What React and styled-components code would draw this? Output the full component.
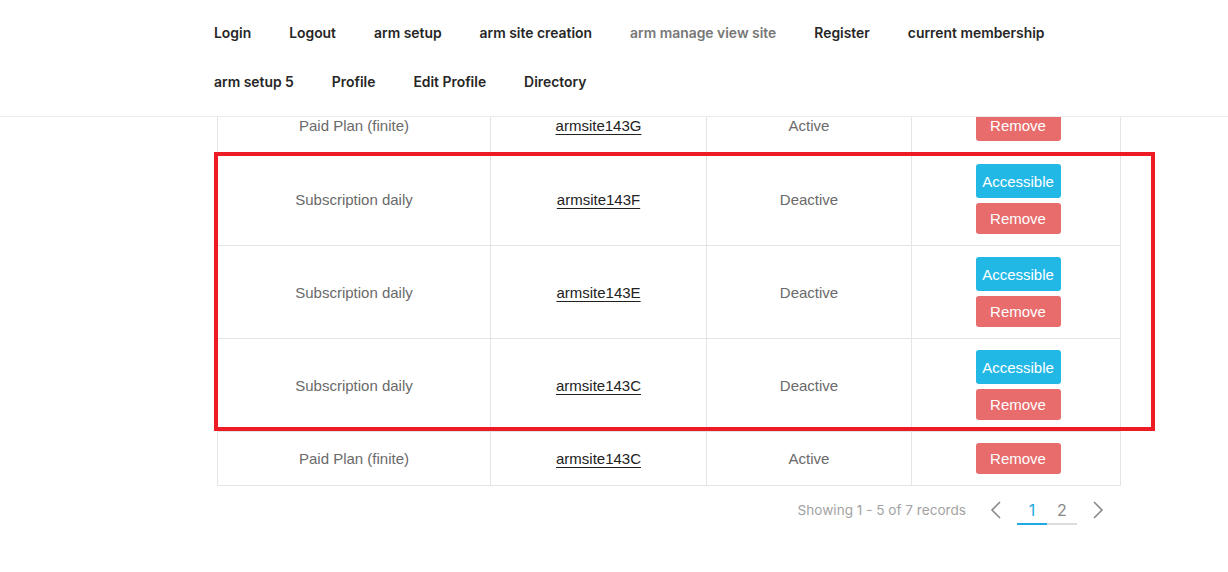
import React from 'react';
import styled, { createGlobalStyle } from 'styled-components';

const GlobalStyle = createGlobalStyle`
  body {
    margin: 0;
    background: #fff;
    font-family: 'Liberation Sans', Arial, sans-serif;
  }
`;

const Header = styled.header`
  position: fixed;
  top: 0;
  left: 0;
  right: 0;
  height: 116px;
  background: #fff;
  border-bottom: 1px solid #ececec;
  z-index: 10;
`;

const Nav = styled.nav`
  display: flex;
  flex-wrap: wrap;
  column-gap: 38px;
  padding: 22px 0 0 214px;
  width: 860px;
`;

const NavItem = styled.a`
  font-family: 'Inter', 'Noto Sans', sans-serif;
  font-size: 13.9px;
  font-weight: 600;
  line-height: 49px;
  height: 49px;
  margin-top: -13px;
  margin-bottom: 13px;
  color: ${(p) => (p.current ? '#777' : '#262626')};
  text-decoration: none;
  white-space: nowrap;
`;

const Main = styled.main`
  padding: 98px 0 0 217px;
  width: 903px;
`;

const Wrap = styled.div`
  position: relative;
`;

const Table = styled.table`
  width: 903px;
  border-collapse: collapse;
  table-layout: fixed;
`;

const Td = styled.td`
  border: 1px solid #e1e5e7;
  text-align: center;
  vertical-align: middle;
  padding: 11px 8px;
  font-size: 15px;
  color: #6a6a6a;
  height: ${(p) => (p.tall ? '70px' : '30px')};
`;

const SiteLink = styled.a`
  color: #222;
  text-decoration: underline;
  text-underline-offset: 3px;
`;

const Actions = styled.div`
  display: flex;
  flex-direction: column;
  align-items: center;
  gap: 5px;
  margin-left: 4px;
`;

const Button = styled.button`
  width: 85px;
  height: ${(p) => (p.variant === 'access' ? '34px' : '31px')};
  border: none;
  border-radius: 3px;
  color: #fff;
  font-family: 'Liberation Sans', Arial, sans-serif;
  font-size: 15px;
  background: ${(p) => (p.variant === 'access' ? '#22b8e6' : '#e86c6b')};
  padding: 0;
`;

const Highlight = styled.div`
  position: absolute;
  left: -3px;
  top: 54px;
  width: 941px;
  height: 279px;
  border: 4px solid #ed1c24;
  box-sizing: border-box;
  pointer-events: none;
`;

const Footer = styled.div`
  display: flex;
  justify-content: flex-end;
  align-items: center;
  margin-top: 9px;
  padding-right: 10px;
  font-family: 'Inter', 'Noto Sans', sans-serif;
`;

const Showing = styled.span`
  font-size: 13.6px;
  color: #a3a3a3;
  margin-right: 18px;
`;

const Pager = styled.div`
  display: flex;
  align-items: center;
`;

const Arrow = styled.span`
  display: flex;
  align-items: center;
  justify-content: center;
  width: 24px;
  height: 30px;
  margin: ${(p) => (p.dir === 'left' ? '0 9px 0 0' : '0 0 0 9px')};
`;

const Page = styled.span`
  width: 30px;
  height: 30px;
  display: flex;
  align-items: center;
  justify-content: center;
  font-size: 16px;
  color: ${(p) => (p.active ? '#22a9e0' : '#888')};
  border-bottom: 2px solid ${(p) => (p.active ? '#22a9e0' : '#ddd')};
  box-sizing: border-box;
  padding-top: 2px;
`;

const navItems = [
  'Login',
  'Logout',
  'arm setup',
  'arm site creation',
  'arm manage view site',
  'Register',
  'current membership',
  'arm setup 5',
  'Profile',
  'Edit Profile',
  'Directory',
];

const rows = [
  { plan: 'Paid Plan (finite)', site: 'armsite143G', status: 'Active', access: false },
  { plan: 'Subscription daily', site: 'armsite143F', status: 'Deactive', access: true },
  { plan: 'Subscription daily', site: 'armsite143E', status: 'Deactive', access: true },
  { plan: 'Subscription daily', site: 'armsite143C', status: 'Deactive', access: true },
  { plan: 'Paid Plan (finite)', site: 'armsite143C', status: 'Active', access: false },
];

const Chevron = ({ dir }) => (
  <svg width="12" height="20" viewBox="0 0 12 20" fill="none" stroke="#888" strokeWidth="1.6">
    {dir === 'left' ? <path d="M10 2 L2 10 L10 18" /> : <path d="M2 2 L10 10 L2 18" />}
  </svg>
);

export default function App() {
  return (
    <>
      <GlobalStyle />
      <Header>
        <Nav>
          {navItems.map((item) => (
            <NavItem key={item} href="#" current={item === 'arm manage view site'}>
              {item}
            </NavItem>
          ))}
        </Nav>
      </Header>
      <Main>
        <Wrap>
          <Table>
            <colgroup>
              <col style={{ width: 273 }} />
              <col style={{ width: 216 }} />
              <col style={{ width: 205 }} />
              <col style={{ width: 209 }} />
            </colgroup>
            <tbody>
              {rows.map((r, i) => (
                <tr key={i}>
                  <Td tall={r.access}>{r.plan}</Td>
                  <Td tall={r.access}>
                    <SiteLink href="#">{r.site}</SiteLink>
                  </Td>
                  <Td tall={r.access}>{r.status}</Td>
                  <Td tall={r.access}>
                    <Actions>
                      {r.access && <Button variant="access">Accessible</Button>}
                      <Button>Remove</Button>
                    </Actions>
                  </Td>
                </tr>
              ))}
            </tbody>
          </Table>
          <Highlight />
        </Wrap>
        <Footer>
          <Showing>Showing 1 - 5 of 7 records</Showing>
          <Pager>
            <Arrow dir="left">
              <Chevron dir="left" />
            </Arrow>
            <Page active>1</Page>
            <Page>2</Page>
            <Arrow dir="right">
              <Chevron dir="right" />
            </Arrow>
          </Pager>
        </Footer>
      </Main>
    </>
  );
}
